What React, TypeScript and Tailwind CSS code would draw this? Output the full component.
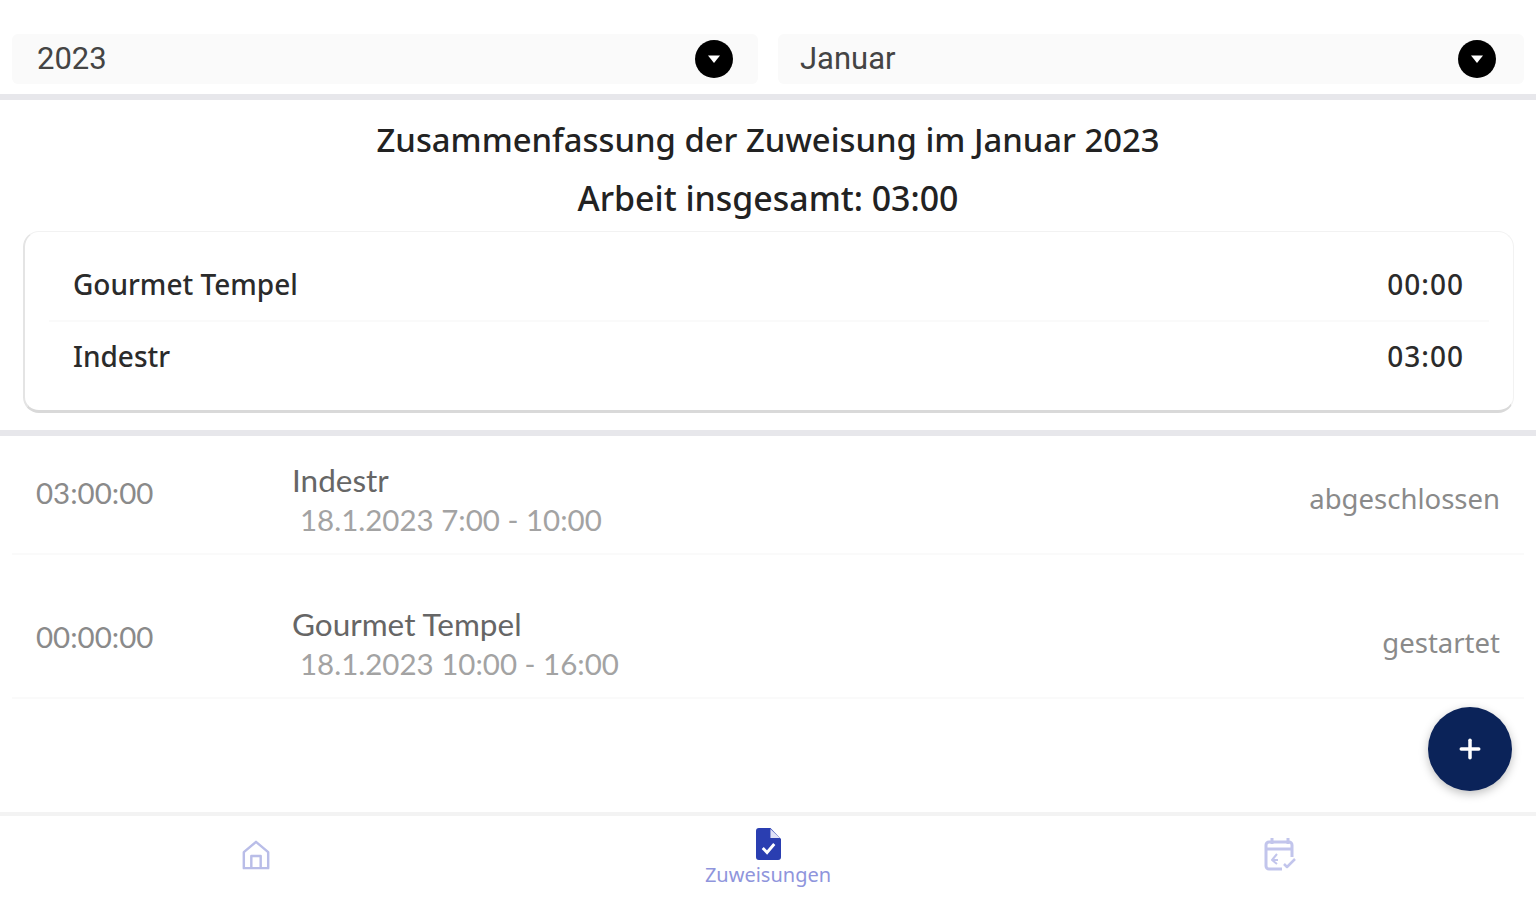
import { Plus } from "lucide-react";

function Dropdown({ label, padding }: { label: string; padding: string }) {
  return (
    <div className={`flex-1 h-[50px] bg-[#fafafa] rounded-md flex items-center justify-between font-['Roboto',sans-serif] text-[31px] text-[#444444] ${padding}`}>
      <span>{label}</span>
      <div className="w-[38px] h-[38px] rounded-full bg-black flex items-center justify-center">
        <svg width="14" height="10" viewBox="0 0 14 10">
          <path d="M1 1.5h12L7 9z" fill="white" />
        </svg>
      </div>
    </div>
  );
}

function SummaryRow({ name, time, height }: { name: string; time: string; height: string }) {
  return (
    <div className={`flex items-center justify-between pl-[24px] pr-[25px] ${height}`}>
      <span>{name}</span>
      <span className="tracking-[1px]">{time}</span>
    </div>
  );
}

function AssignmentRow({ time, name, date, status }: { time: string; name: string; date: string; status: string }) {
  return (
    <div className="h-[144px] mx-3 border-b-2 border-[#fafafa] flex items-center pl-6 pr-6 pt-[22px]">
      <div className="w-[256px] text-[29.5px] text-[#8a8a8a]">{time}</div>
      <div className="flex-1 pt-[14px]">
        <div className="text-[31.5px] leading-[40px] text-[#666666]">{name}</div>
        <div className="text-[29.5px] leading-[40px] text-[#a3a3a3] pl-[8px]">{date}</div>
      </div>
      <div className="font-['Noto_Sans',sans-serif] text-[27.5px] text-[#8a8a8a] pt-[12px]">{status}</div>
    </div>
  );
}

export default function App() {
  return (
    <div className="relative h-[900px] bg-white flex flex-col font-['Lato',sans-serif] overflow-hidden">
      {/* Jahr / Monat */}
      <div className="h-[100px] pt-[34px] px-3 flex gap-5 border-b-[6px] border-[#e7e7eb]">
        <Dropdown label="2023" padding="pl-[25px] pr-[25px]" />
        <Dropdown label="Januar" padding="pl-[22px] pr-[28px]" />
      </div>

      <div className="text-center text-[#222222] font-medium font-['Noto_Sans',sans-serif]">
        <div className="text-[32.8px] leading-[58px] mt-[11px]">Zusammenfassung der Zuweisung im Januar 2023</div>
        <div className="text-[33.9px] leading-[58px]">Arbeit insgesamt: 03:00</div>
      </div>

      {/* Zusammenfassung */}
      <div className="ml-[23px] mt-[4px] w-[1491px] h-[182px] rounded-2xl bg-white border border-[#f2f2f2] border-b-[3px] border-b-[#d9d9d9] border-l-2 border-l-[#e4e4e4] pt-[15px] px-6 font-['Noto_Sans',sans-serif] text-[28px] font-medium text-[#2b2b2b]">
        <SummaryRow name="Gourmet Tempel" time="00:00" height="h-[73px]" />
        <div className="h-[2px] bg-[#fafafa]" />
        <SummaryRow name="Indestr" time="03:00" height="h-[68px]" />
      </div>

      <div className="mt-[17px] h-[6px] bg-[#e7e7eb]" />

      {/* Liste, die erste Zeile ist oben angeschnitten */}
      <div className="flex-1 -mt-[25px]">
        <AssignmentRow time="03:00:00" name="Indestr" date="18.1.2023 7:00 - 10:00" status="abgeschlossen" />
        <AssignmentRow time="00:00:00" name="Gourmet Tempel" date="18.1.2023 10:00 - 16:00" status="gestartet" />
      </div>

      {/* Navigation unten */}
      <div className="h-[88px] bg-white border-t-4 border-[#f3f3f3] flex">
        <div className="flex-1 flex items-center justify-center pb-[7px]">
          <svg width="30" height="32" viewBox="0 0 32 34" fill="none" stroke="#b9bde8" strokeWidth="2.6" strokeLinejoin="round">
            <path d="M3 14 16 3l13 11v17H3z" />
            <path d="M11 31V18h10v13" />
          </svg>
        </div>
        <div className="flex-1 flex flex-col items-center pt-[12px]">
          <svg width="25" height="32" viewBox="0 0 26 32" preserveAspectRatio="none">
            <path d="M3 0h12l11 11v18a3 3 0 0 1-3 3H3a3 3 0 0 1-3-3V3a3 3 0 0 1 3-3z" fill="#2a3eb1" />
            <path d="M15 1v9h10z" fill="#dfe2f7" />
            <path d="m7 20 4.5 4.5L19 16" fill="none" stroke="white" strokeWidth="3" />
          </svg>
          <span className="font-['Noto_Sans',sans-serif] text-[20px] leading-[26px] text-[#8f95dc] mt-[2px]">Zuweisungen</span>
        </div>
        <div className="flex-1 flex items-center justify-center pb-[8px]">
          <svg width="32" height="34" viewBox="0 0 32 34" fill="none" stroke="#c2c5ec" strokeWidth="3" strokeLinejoin="round">
            <path d="M8 1v6M24 1v6" />
            <path d="M28 20V8a3 3 0 0 0-3-3H5a3 3 0 0 0-3 3v21a3 3 0 0 0 3 3h13" />
            <path d="M2 12h26" />
            <path d="M13 17 8 23l5 4M8 23h6" strokeWidth="2" />
            <path d="m20 27 3 3 8-8" strokeWidth="2.5" />
          </svg>
        </div>
      </div>

      {/* FAB */}
      <div className="absolute left-[1428px] top-[707px] w-[84px] h-[84px] rounded-full bg-[#0b2359] shadow-[0_3px_10px_rgba(0,0,0,0.25)] flex items-center justify-center">
        <Plus size={30} color="white" strokeWidth={2.8} />
      </div>
    </div>
  );
}
